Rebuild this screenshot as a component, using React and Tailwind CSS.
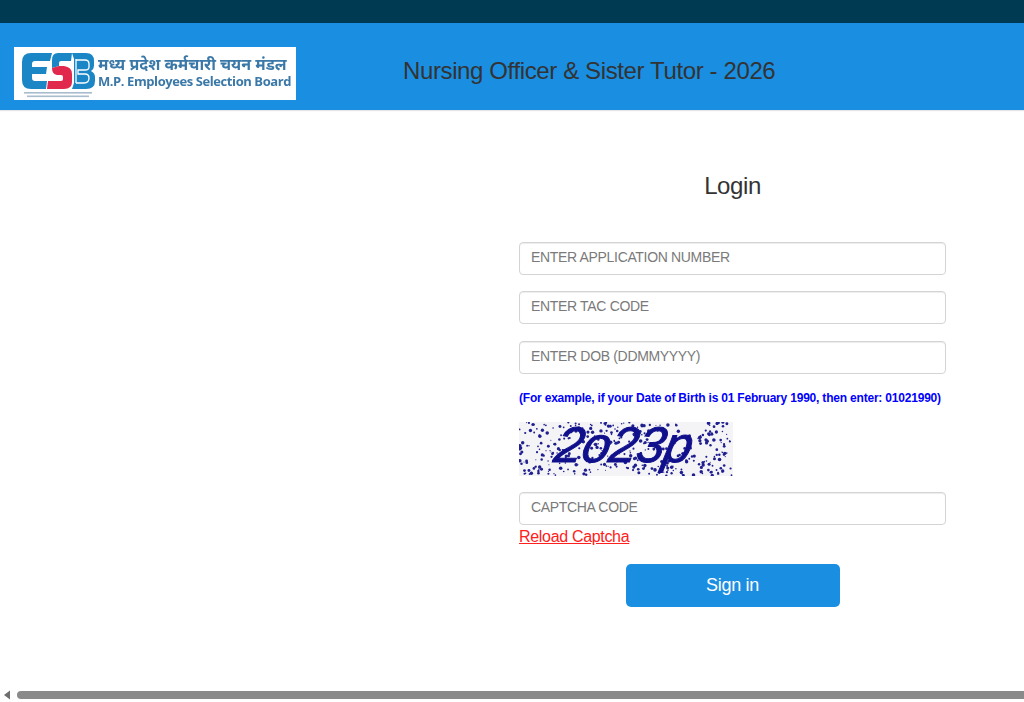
import React from "react";

function Logo() {
  return (
    <svg width="73" height="47" viewBox="0 0 73 47" className="shrink-0 blur-[0.4px]">
      <path d="M9 0 H30 L28 8 H13 Q10 8 10 11 V14 H25 L24 21 H10 V25 Q10 28 13 28 H25 L24 36 H9 Q0 36 0 27 V9 Q0 0 9 0Z" fill="#1a86c6" />
      <path d="M36 0 H50 L49 8 H39 Q37 8 37 10 V13 L30 15 V7 Q30 0 36 0Z" fill="#1a86c6" />
      <path d="M30 15 L37 13 H42 Q50 14 50 21 V29 Q50 36 42 36 H25 L26 28 H39 Q41 28 41 26 V24 Q41 22 39 22 H35 Q30 21 30 15Z" fill="#e0294c" />
      <path d="M50 0 H64 Q72 0 72 8 V13 Q72 16 69 18 Q73 20 73 24 V28 Q73 36 64 36 H50 L52 30 V6Z" fill="#1a86c6" />
      <path d="M54 6 V30 M54 7 H63 Q67 7 67 11 V14 Q67 17 63 17 H56 V21 H63 Q67 21 67 25 Q67 30 62 30 H54" stroke="#fff" strokeWidth="1.3" fill="none" />
      <rect x="2" y="39" width="68" height="1.6" fill="#a9bccd" />
      <rect x="5" y="42.5" width="62" height="1.6" fill="#a9bccd" />
    </svg>
  );
}

function Captcha() {
  const dots = [];
  let s = 12345;
  const r = () => {
    s = (s * 16807) % 2147483647;
    return s / 2147483647;
  };
  for (let i = 0; i < 400; i++) {
    dots.push(
      <circle key={i} cx={r() * 214} cy={r() * 54} r={0.5 + r() * 1.3} fill="#1f1f8f" />
    );
  }
  return (
    <div className="relative w-[214px] h-[54px] bg-[#f4f4f6]">
      <svg width="214" height="54" className="block">{dots}</svg>
      <span className="absolute left-[37px] top-0 inline-block -skew-x-12 text-[50px] leading-[46px] italic text-[#10108c] font-['Liberation_Sans',sans-serif] tracking-[-0.5px] [-webkit-text-stroke:1px_#10108c]">
        2o23p
      </span>
    </div>
  );
}

function Field({ placeholder, className }) {
  return (
    <input
      placeholder={placeholder}
      className={`block w-[427px] h-[33px] pl-[11px] pr-3 pb-[3px] rounded-[4px] border border-[#d4d4d4] bg-white text-[14px] tracking-[-0.33px] text-[#555] placeholder:text-[#7a7a7a] shadow-[inset_0_1px_1px_rgba(0,0,0,0.075)] outline-none ${className}`}
    />
  );
}

export default function App() {
  return (
    <div className="w-[1024px] h-[702px] flex flex-col overflow-hidden bg-white font-['Liberation_Sans',Arial,sans-serif] text-[#333]">
      <div className="h-[23px] bg-[#003a52]" />
      <header className="h-[87px] bg-[#1a8ee1] flex items-center pl-[14px] pt-[14px] shadow-[0_1px_1px_rgba(0,0,0,0.1)]">
        <div className="w-[282px] h-[53px] bg-white flex items-start pl-[8px] pt-[6px] gap-[3px] shrink-0">
          <Logo />
          <div className="flex flex-col gap-[1px] pt-[3px] text-[#3a78a8] font-bold blur-[0.4px]">
            <span className="text-[16px] font-['Noto_Sans','DejaVu_Sans',sans-serif] leading-[16px] whitespace-nowrap">मध्य प्रदेश कर्मचारी चयन मंडल</span>
            <span className="text-[13px] font-['Open_Sans',sans-serif] tracking-[-0.42px] leading-[16px] whitespace-nowrap">M.P. Employees Selection Board</span>
          </div>
        </div>
        <h1 className="ml-[107px] text-[24px] tracking-[-0.38px] leading-[26px] mt-[-5px] text-[#333] whitespace-nowrap">
          Nursing Officer &amp; Sister Tutor - 2026
        </h1>
      </header>
      <main className="flex-1 pl-[519px] pt-[63px]">
        <h2 className="w-[427px] text-center text-[24px] tracking-[-0.4px] leading-[26px] text-[#333]">Login</h2>
        <Field placeholder="ENTER APPLICATION NUMBER" className="mt-[43px]" />
        <Field placeholder="ENTER TAC CODE" className="mt-[16px]" />
        <Field placeholder="ENTER DOB (DDMMYYYY)" className="mt-[17px]" />
        <p className="mt-[16px] text-[12px] tracking-[-0.2px] leading-[16px] font-bold text-[#0000ff] whitespace-nowrap">
          (For example, if your Date of Birth is 01 February 1990, then enter: 01021990)
        </p>
        <div className="mt-[16px]">
          <Captcha />
        </div>
        <Field placeholder="CAPTCHA CODE" className="mt-[16px]" />
        <a href="#" className="block w-fit mt-[2px] text-[16px] tracking-[-0.32px] leading-[20px] text-[#ff2020] underline">
          Reload Captcha
        </a>
        <div className="w-[427px] flex justify-center mt-[17px]">
          <button className="w-[214px] h-[43px] rounded-[5px] bg-[#1a8ee1] text-white text-[18px] tracking-[-0.3px] pb-[1px]">Sign in</button>
        </div>
      </main>
      <div className="h-[14px] flex items-center bg-white shrink-0">
        <svg width="17" height="14" viewBox="0 0 17 14" className="shrink-0">
          <path d="M4 7 L10 2.5 V11.5 Z" fill="#6e6e6e" />
        </svg>
        <div className="flex-1 h-[8px] rounded-l-[4px] bg-[#8a8a8a]" />
      </div>
    </div>
  );
}
